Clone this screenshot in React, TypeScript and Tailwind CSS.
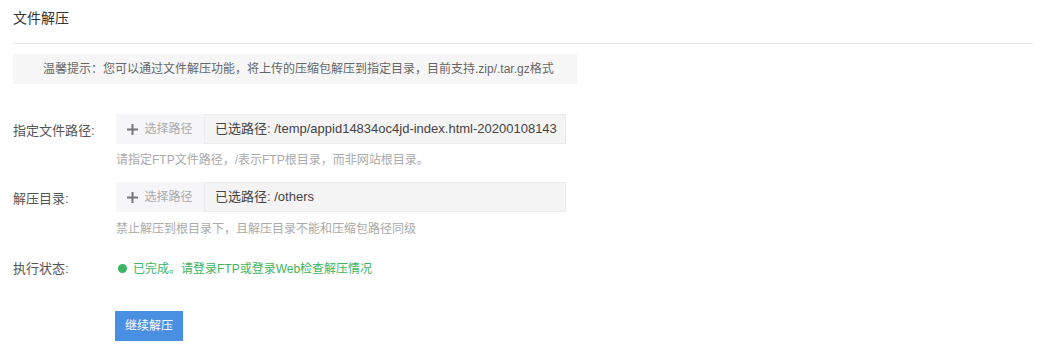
import React from 'react';

const font = { fontFamily: '"Liberation Sans", "Noto Sans CJK SC", sans-serif' };

const PathPicker = ({ value }: { value: string }) => (
  <div className="flex h-[30px] w-[450px]">
    <button className="flex w-[88px] shrink-0 items-center justify-center gap-[6px] bg-[#f6f6f8] text-[12px] text-[#aaa]">
      <svg width="11" height="11" viewBox="0 0 11 11">
        <path d="M5.5 0v11M0 5.5h11" stroke="#777" strokeWidth="2" />
      </svg>
      选择路径
    </button>
    <div className="flex flex-1 items-center overflow-hidden whitespace-nowrap border border-[#ececec] bg-[#f4f4f4] pl-[10px] text-[13px] text-[#444]">
      {value}
    </div>
  </div>
);

const App = () => {
  return (
    <main className="min-h-screen bg-white pl-[13px] pr-[11px] text-[#333]" style={font}>
      <h2 className="pt-[9px] text-[14px] leading-[18px] text-[#333]">文件解压</h2>
      <div className="mt-[16px] h-px bg-[#e6e6e6]" />

      <div className="mt-[10px] flex h-[30px] w-[564px] items-center bg-[#f6f6f6] pl-[30px] text-[12px] text-[#666]">
        温馨提示：您可以通过文件解压功能，将上传的压缩包解压到指定目录，目前支持.zip/.tar.gz格式
      </div>

      <div className="mt-[30px] flex items-start">
        <div className="w-[103px] pt-[7px] text-[13px] text-[#555]">指定文件路径:</div>
        <div>
          <PathPicker value="已选路径: /temp/appid14834oc4jd-index.html-20200108143" />
          <p className="mt-[8px] text-[12px] leading-[16px] text-[#aaa]">请指定FTP文件路径，/表示FTP根目录，而非网站根目录。</p>
        </div>
      </div>

      <div className="mt-[14px] flex items-start">
        <div className="w-[103px] pt-[7px] text-[13px] text-[#555]">解压目录:</div>
        <div>
          <PathPicker value="已选路径: /others" />
          <p className="mt-[9px] text-[12px] leading-[16px] text-[#aaa]">禁止解压到根目录下，且解压目录不能和压缩包路径同级</p>
        </div>
      </div>

      <div className="mt-[22px] flex items-center">
        <div className="w-[103px] text-[13px] text-[#555]">执行状态:</div>
        <div className="flex items-center gap-[6px] pl-[2px] text-[12px] text-[#3cb563]">
          <span className="h-[9px] w-[9px] rounded-full bg-[#3cb563]" />
          已完成。请登录FTP或登录Web检查解压情况
        </div>
      </div>

      <button className="ml-[102px] mt-[32px] h-[30px] w-[68px] bg-[#4a90e2] text-[12px] text-white">继续解压</button>
    </main>
  );
};

export default App;
